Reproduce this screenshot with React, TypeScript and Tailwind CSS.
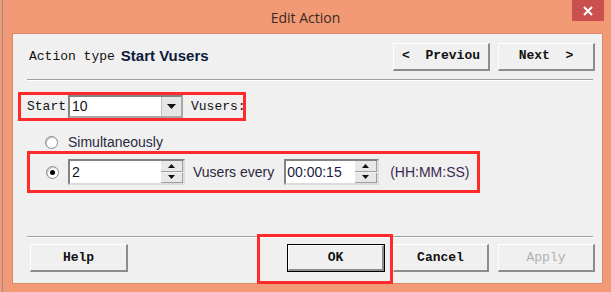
import React from 'react';

const mono = { fontFamily: '"Liberation Mono", "DejaVu Sans Mono", monospace' };
const sans = { fontFamily: '"Liberation Sans", Arial, sans-serif' };

const WinButton: React.FC<{ label: string; width: string; disabled?: boolean; isDefault?: boolean }> = ({
  label,
  width,
  disabled,
  isDefault,
}) => (
  <div className={`${width} h-[28px] ${isDefault ? 'border border-black' : ''}`}>
    <div
      className={`h-full w-full flex items-center justify-center bg-[#f0f0f0] border-t border-l border-t-white border-l-white border-r-2 border-b-2 border-r-[#8c8c8c] border-b-[#8c8c8c] text-[13px] font-bold whitespace-pre ${
        disabled ? 'text-[#b0b0b0] font-normal' : 'text-[#111]'
      }`}
      style={mono}
    >
      {label}
    </div>
  </div>
);

const Radio: React.FC<{ checked?: boolean }> = ({ checked }) => (
  <div className="w-[13px] h-[13px] rounded-full border border-[#8a8a8a] bg-white flex items-center justify-center shadow-[inset_1px_1px_0_#c4c4c4]">
    {checked && <div className="w-[5px] h-[5px] rounded-full bg-black" />}
  </div>
);

const Spinner: React.FC = () => (
  <div className="w-[22px] h-full flex flex-col gap-[1px] bg-[#f0f0f0]">
    <div className="flex-1 flex items-center justify-center bg-[#e8e8e8] border-b border-r border-[#a0a0a0]">
      <svg width="7" height="4" viewBox="0 0 7 4">
        <path d="M3.5 0 L7 4 L0 4 Z" fill="#111" />
      </svg>
    </div>
    <div className="flex-1 flex items-center justify-center bg-[#e8e8e8] border-b border-r border-[#a0a0a0]">
      <svg width="7" height="4" viewBox="0 0 7 4">
        <path d="M0 0 L7 0 L3.5 4 Z" fill="#111" />
      </svg>
    </div>
  </div>
);

const Separator: React.FC<{ className?: string }> = ({ className }) => (
  <div className={`h-[2px] border-t border-t-[#a0a0a0] border-b border-b-white ${className ?? ''}`} />
);

export default function App() {
  return (
    <div className="relative w-[611px] h-[292px] bg-[#f29a75] overflow-hidden">
      <div className="absolute left-[2px] top-0 w-[1px] h-full bg-[#8f8f8f]" />

      {/* Title bar */}
      <div className="relative h-[33px] flex items-center justify-center">
        <span className="text-[14px] text-[#3b2a22] pt-[2px]" style={{ fontFamily: '"Open Sans", "Liberation Sans", sans-serif' }}>
          Edit Action
        </span>
        <div className="absolute right-[7px] top-0 w-[32px] h-[21px] bg-[#c9504f] flex items-center justify-center">
          <svg width="10" height="10" viewBox="0 0 10 10">
            <path d="M1 1 L9 9 M9 1 L1 9" stroke="white" strokeWidth="2" />
          </svg>
        </div>
      </div>

      {/* Client area */}
      <div className="ml-[12px] w-[591px] h-[251px] border border-[#d98a68] bg-[#f0f0f0]">
        <div className="relative h-full flex flex-col">
          {/* Header */}
          <div className="mt-[9px] h-[27px] pl-[16px] pr-[7px] flex items-center justify-between">
            <div className="flex items-center gap-[6px]">
              <span className="text-[13px] text-[#111]" style={mono}>
                Action type
              </span>
              <span className="text-[15px] font-bold text-[#0d1a3a]" style={sans}>
                Start Vusers
              </span>
            </div>
            <div className="flex gap-[8px]">
              <WinButton label="<  Previou" width="w-[97px]" />
              <WinButton label="Next  >" width="w-[97px]" />
            </div>
          </div>

          <Separator className="mt-[9px] ml-[14px] mr-[9px]" />

          {/* Start N Vusers */}
          <div className="mt-[11px] ml-[5px] w-[228px] h-[29px] border-[3px] border-[#ff2b2b] flex items-center pl-[6px] gap-[2px] overflow-hidden whitespace-nowrap">
            <span className="text-[13px] text-[#111]" style={mono}>
              Start
            </span>
            <div className="w-[115px] h-[23px] shrink-0 bg-white border-2 border-t-[#828282] border-l-[#828282] border-r-[#a8a8a8] border-b-[#a8a8a8] flex items-center">
              <span className="flex-1 pl-[2px] text-[14px] text-[#111]" style={sans}>
                10
              </span>
              <div className="w-[20px] h-full bg-[#e6e6e6] border-l border-[#c0c0c0] flex items-center justify-center">
                <svg width="9" height="5" viewBox="0 0 9 5">
                  <path d="M0 0 L9 0 L4.5 5 Z" fill="#111" />
                </svg>
              </div>
            </div>
            <span className="ml-[6px] text-[13px] text-[#111]" style={mono}>
              Vusers:
            </span>
          </div>

          {/* Simultaneously */}
          <div className="mt-[13px] h-[16px] ml-[32px] flex items-center gap-[10px]">
            <Radio />
            <span className="text-[14px] text-[#2a2a3e]" style={sans}>
              Simultaneously
            </span>
          </div>

          {/* N Vusers every */}
          <div className="mt-[1px] ml-[14px] w-[453px] h-[42px] border-[3px] border-[#ff2b2b] flex items-center pl-[16px]">
            <Radio checked />
            <div className="ml-[9px] w-[117px] h-[26px] flex bg-white border-2 border-t-[#828282] border-l-[#828282] border-r-[#dcdcdc] border-b-[#dcdcdc]">
              <span className="flex-1 pl-[2px] text-[14px] leading-[22px] text-[#111]" style={sans}>
                2
              </span>
              <Spinner />
            </div>
            <span className="ml-[8px] text-[14px] text-[#2a2a3e]" style={sans}>
              Vusers every
            </span>
            <div className="ml-[10px] w-[95px] h-[26px] flex bg-white border-2 border-t-[#828282] border-l-[#828282] border-r-[#dcdcdc] border-b-[#dcdcdc]">
              <span className="flex-1 pl-[1px] text-[14px] leading-[22px] text-[#1a1a40]" style={sans}>
                00:00:15
              </span>
              <Spinner />
            </div>
            <span className="ml-[11px] text-[14px] text-[#3a2a50]" style={sans}>
              (HH:MM:SS)
            </span>
          </div>

          <Separator className="mt-[43px] ml-[14px] mr-[9px]" />

          {/* Bottom buttons */}
          <div className="mt-[6px] ml-[17px] flex">
            <WinButton label="Help" width="w-[98px]" />
            <div className="ml-[159px]">
              <WinButton label="OK" width="w-[98px]" isDefault />
            </div>
            <div className="ml-[8px]">
              <WinButton label="Cancel" width="w-[96px]" />
            </div>
            <div className="ml-[9px]">
              <WinButton label="Apply" width="w-[97px]" disabled />
            </div>
          </div>

          {/* Annotation around OK */}
          <div className="absolute left-[244px] top-[200px] w-[136px] h-[50px] border-[3px] border-[#ff2b2b]" />
        </div>
      </div>
    </div>
  );
}
